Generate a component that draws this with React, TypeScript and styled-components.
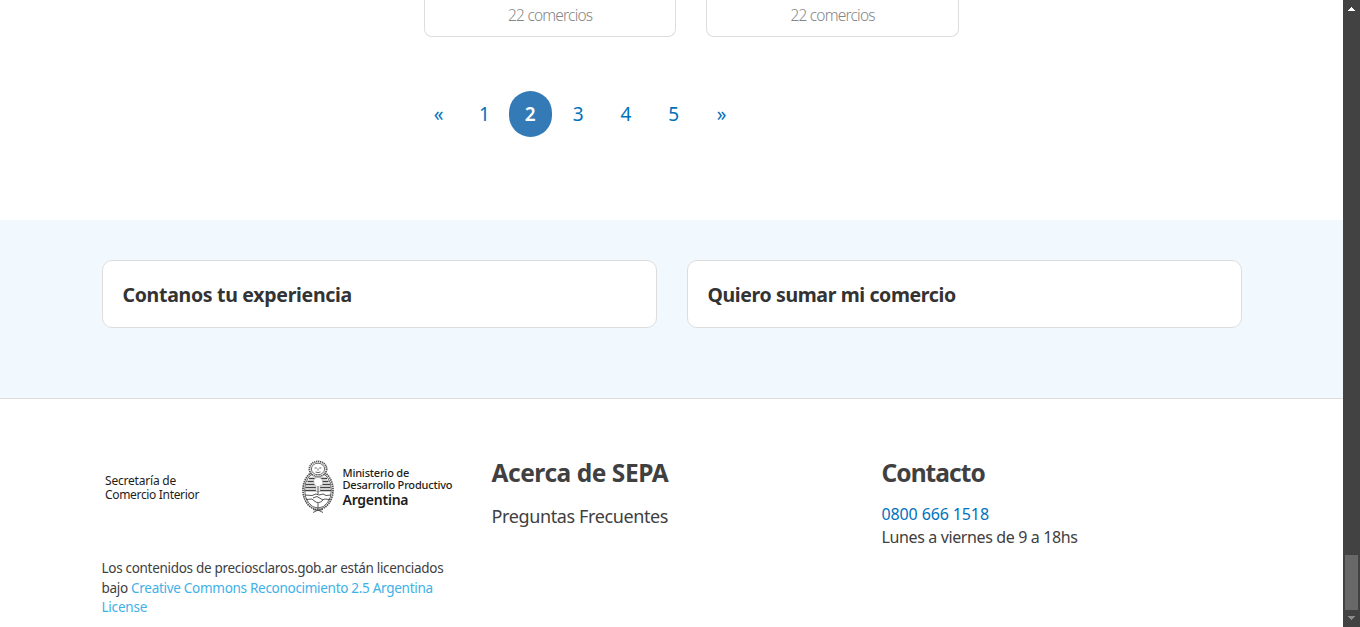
import React from 'react';
import styled, { createGlobalStyle } from 'styled-components';

const GlobalStyle = createGlobalStyle`
  * { box-sizing: border-box; }
  body {
    margin: 0;
    overflow: hidden;
    background: #fff;
    color: #404041;
    font-family: "Noto Sans", "Open Sans", sans-serif;
  }
  a { text-decoration: none; }
`;

const Viewport = styled.div`
  display: flex;
  width: 1360px;
  height: 627px;
  overflow: hidden;
`;

const Page = styled.main`
  flex: 1;
  min-width: 0;
`;

const Results = styled.section`
  height: 220px;
  padding-left: 424px;
`;

const CardRow = styled.div`
  display: flex;
  gap: 30px;
`;

const ShopCard = styled.article`
  width: 252.4px;
  height: 37px;
  border: 1px solid #ddd;
  border-top: 0;
  border-radius: 0 0 8px 8px;
  text-align: center;
  font-size: 15.5px;
  font-weight: 300;
  line-height: 31px;
  letter-spacing: -0.8px;
  color: #858585;
`;

const Pagination = styled.nav`
  display: flex;
  gap: 4.8px;
  margin: 54px 0 0 -6.8px;
`;

const PageLink = styled.a<{ $active?: boolean; $narrow?: boolean }>`
  width: ${p => (p.$narrow ? 39 : 43)}px;
  height: 46px;
  border-radius: 23px;
  text-align: center;
  font-size: 19px;
  font-weight: ${p => (p.$active ? 600 : 400)};
  line-height: 46px;
  color: ${p => (p.$active ? '#fff' : '#0072bb')};
  background: ${p => (p.$active ? '#337ab7' : 'transparent')};
`;

const ActionBand = styled.section`
  display: flex;
  justify-content: center;
  gap: 30px;
  height: 179px;
  padding-top: 40px;
  border-bottom: 1px solid #ddd;
  background: #f1f9ff;
`;

const ActionCard = styled.a<{ $spacing: number }>`
  width: 555px;
  height: 68px;
  padding-left: 20px;
  border: 1px solid #ddd;
  border-radius: 10px;
  background: #fff;
  color: #333;
  font-size: 19.5px;
  font-weight: 700;
  line-height: 67px;
  letter-spacing: ${p => p.$spacing}px;
`;

const Footer = styled.footer`
  display: grid;
  grid-template-columns: repeat(3, 360px);
  justify-content: center;
  gap: 30px;
  padding-top: 58px;
`;

const Column = styled.div`
  white-space: nowrap;
`;

const Logos = styled.div`
  display: flex;
  height: 102px;
  padding: 3px 0 0 3.5px;
  color: #1d1d1b;
`;

const Secretariat = styled.div`
  width: 196px;
  padding-top: 14px;
  font-size: 12px;
  line-height: 14px;
`;

const Ministry = styled.div`
  padding: 7px 0 0 7.5px;
  font-size: 11px;
  font-weight: 500;
  line-height: 12px;
`;

const Country = styled.div`
  font-size: 14px;
  font-weight: 600;
  line-height: 18px;
  letter-spacing: -0.25px;
`;

const Line = styled.div<{ $spacing: number }>`
  letter-spacing: ${p => p.$spacing}px;
`;

const License = styled.div`
  font-size: 13.5px;
  line-height: 19.5px;
`;

const LicenseLink = styled.a`
  color: #3eb1e8;
`;

const Heading = styled.h2<{ $spacing: number }>`
  margin: 0;
  font-size: 24.5px;
  font-weight: 700;
  line-height: 32px;
  letter-spacing: ${p => p.$spacing}px;
`;

const FooterLink = styled.a`
  display: block;
  margin-top: 15px;
  font-size: 18px;
  line-height: 24px;
  letter-spacing: -0.38px;
  color: #404041;
`;

const ContactInfo = styled.div`
  margin-top: 14px;
  font-size: 16px;
  line-height: 23px;
`;

const Phone = styled.a`
  display: block;
  letter-spacing: -0.12px;
  color: #0072bb;
`;

const Scrollbar = styled.aside`
  display: flex;
  flex-direction: column;
  align-items: center;
  width: 17px;
  padding: 7px 0;
  background: #424242;
`;

const Thumb = styled.div`
  width: 13px;
  height: 55px;
  margin: auto 0 6px;
  background: #686868;
`;

function Arrow({ down = false }: { down?: boolean }) {
  return (
    <svg width="7" height="4" viewBox="0 0 7 4" shapeRendering="crispEdges">
      {down ? <path d="M0 0h7v1H0zM1 1h5v1H1zM2 2h3v1H2zM3 3h1v1H3z" fill="#8b8b8b" />
        : <path d="M3 0h1v1H3zM2 1h3v1H2zM1 2h5v1H1zM0 3h7v1H0z" fill="#fff" />}
    </svg>
  );
}

function CoatOfArms() {
  return (
    <svg width="34" height="54" viewBox="0 0 34 54" fill="none" stroke="#444">
      <ellipse cx="17" cy="30" rx="13.4" ry="18" fill="#fff" strokeWidth=".8" />
      <ellipse cx="17" cy="30" rx="15" ry="19.4" strokeWidth="1.8" strokeDasharray="1.5 .7" stroke="#555" />
      <ellipse cx="17" cy="9" rx="8.6" ry="7.6" strokeWidth="1.8" strokeDasharray="1.3 .7" stroke="#555" fill="#fff" />
      <ellipse cx="17" cy="9" rx="6.6" ry="5.8" strokeWidth=".8" fill="#fff" />
      <path d="M13.6 8h2.2M18.2 8h2.2M17 8.500v2M14.500 12q2.500 1.200 5 0" strokeWidth=".8" />
      <path d="M8 18.500h18M6.500 21.500h21M5 24.500h24M4.500 27.500h25M4 30.500h26" strokeWidth="1.3" />
      <path d="M13 23c-1-4 1-5.500 4-5.500s4 1.500 4.500 4c1 3-.5 4-2.500 4v6h-4v-6c-1 0-2-1-2-2.500z" fill="#fff" stroke="#999" strokeWidth=".5" />
      <path d="M17 26v8M17 43v6" strokeWidth=".9" />
      <path d="M4 35l7 .5 4-1.500 3 1 4-1 3 1.500 5-.5M5 39.500l6-.5 3 2.500c2 1.500 5 1.500 7-.5l2-2 6 .5M12 38l4-1.500 6 3.500" strokeWidth=".9" />
      <path d="M12 52.500l5-2.500 5 2.500M12 49.500l5 1 5-1" strokeWidth=".9" />
    </svg>
  );
}

export default function App() {
  return (
    <Viewport>
      <GlobalStyle />
      <Page>
        <Results>
          <CardRow>
            <ShopCard>22 comercios</ShopCard>
            <ShopCard>22 comercios</ShopCard>
          </CardRow>
          <Pagination>
            <PageLink>«</PageLink>
            <PageLink $narrow>1</PageLink>
            <PageLink $active>2</PageLink>
            <PageLink>3</PageLink>
            <PageLink>4</PageLink>
            <PageLink>5</PageLink>
            <PageLink>»</PageLink>
          </Pagination>
        </Results>
        <ActionBand>
          <ActionCard $spacing={-0.3}>Contanos tu experiencia</ActionCard>
          <ActionCard $spacing={-0.38}>Quiero sumar mi comercio</ActionCard>
        </ActionBand>
        <Footer>
          <Column>
            <Logos>
              <Secretariat>
                <Line $spacing={-0.2}>Secretaría de</Line>
                <Line $spacing={-0.33}>Comercio Interior</Line>
              </Secretariat>
              <CoatOfArms />
              <Ministry>
                <Line $spacing={-0.2}>Ministerio de</Line>
                <Line $spacing={-0.2}>Desarrollo Productivo</Line>
                <Country>Argentina</Country>
              </Ministry>
            </Logos>
            <License>
              <Line $spacing={-0.3}>Los contenidos de preciosclaros.gob.ar están licenciados</Line>
              <Line $spacing={-0.29}>bajo <LicenseLink>Creative Commons Reconocimiento 2.5 Argentina</LicenseLink></Line>
              <Line $spacing={-0.22}><LicenseLink>License</LicenseLink></Line>
            </License>
          </Column>
          <Column>
            <Heading $spacing={-0.45}>Acerca de SEPA</Heading>
            <FooterLink>Preguntas Frecuentes</FooterLink>
          </Column>
          <Column>
            <Heading $spacing={-0.95}>Contacto</Heading>
            <ContactInfo>
              <Phone>0800 666 1518</Phone>
              <Line $spacing={-0.37}>Lunes a viernes de 9 a 18hs</Line>
            </ContactInfo>
          </Column>
        </Footer>
      </Page>
      <Scrollbar>
        <Arrow />
        <Thumb />
        <Arrow down />
      </Scrollbar>
    </Viewport>
  );
}
